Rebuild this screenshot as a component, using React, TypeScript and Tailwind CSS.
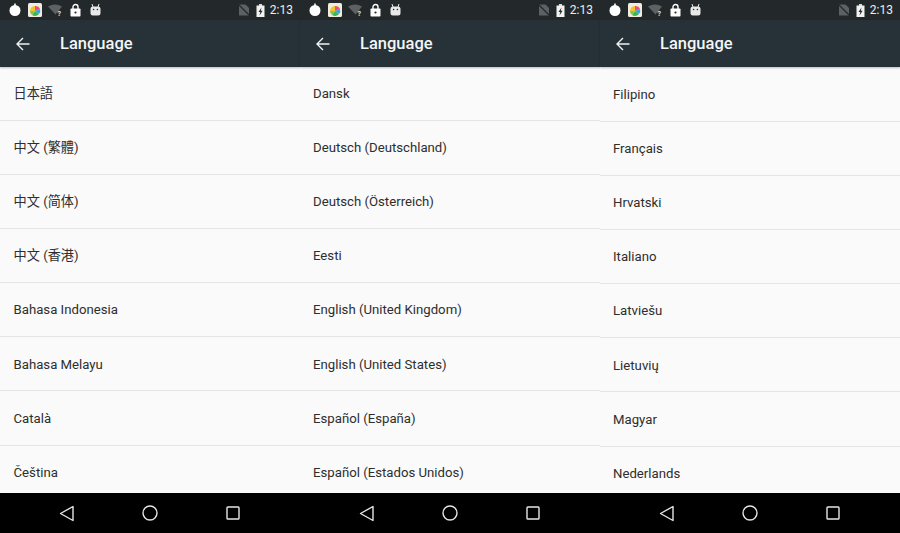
const phones = [
  {
    offset: "",
    left: "pl-[13.5px]",
    items: ["日本語", "中文 (繁體)", "中文 (简体)", "中文 (香港)", "Bahasa Indonesia", "Bahasa Melayu", "Català", "Čeština"],
  },
  {
    offset: "",
    left: "pl-[13px]",
    items: ["Dansk", "Deutsch (Deutschland)", "Deutsch (Österreich)", "Eesti", "English (United Kingdom)", "English (United States)", "Español (España)", "Español (Estados Unidos)"],
  },
  {
    offset: "pt-px",
    left: "pl-[13px]",
    items: ["Filipino", "Français", "Hrvatski", "Italiano", "Latviešu", "Lietuvių", "Magyar", "Nederlands"],
  },
];

const StatusLeft = () => (
  <div className="flex items-center">
    <svg width="14" height="14" viewBox="0 0 14 14" className="ml-2">
      <circle cx="7" cy="7.5" r="5.5" fill="#fff" />
      <rect x="6.2" y="0.5" width="1.6" height="2.5" fill="#fff" />
    </svg>
    <svg width="14" height="14" viewBox="0 0 14 14" className="ml-[6px]">
      <rect width="14" height="14" rx="1.5" fill="#f1ece0" />
      <path d="M2 8 A5 5 0 0 1 7 3 L7 8 Z" fill="#f4c430" />
      <path d="M7 3 A5 5 0 0 1 12 6 L7 8 Z" fill="#ef4d7b" />
      <path d="M12 6 A5 5 0 0 1 11 11 L7 8 Z" fill="#33a6e8" />
      <path d="M11 11 A5 5 0 0 1 4 12 L7 8 Z" fill="#3fb45a" />
      <path d="M4 12 A5 5 0 0 1 2 8 L7 8 Z" fill="#8bc34a" />
    </svg>
    <svg width="15" height="14" viewBox="0 0 15 14" className="ml-[6px]">
      <path d="M0 3.5 Q7 -0.5 14 3.5 L7.5 11.5 Z" fill="#5c6163" />
      <text x="9.5" y="13" fontSize="7" fontWeight="700" fill="#e8e8e8" fontFamily="Roboto, sans-serif">?</text>
    </svg>
    <svg width="11" height="14" viewBox="0 0 11 14" className="ml-[7px]">
      <path d="M3 6 V4 a2.5 2.5 0 0 1 5 0 V6" fill="none" stroke="#fff" strokeWidth="1.4" />
      <rect x="0.5" y="5.5" width="10" height="8" rx="0.8" fill="#fff" />
      <circle cx="5.5" cy="9.5" r="1.1" fill="#23292b" />
    </svg>
    <svg width="11" height="14" viewBox="0 0 11 14" className="ml-[9px]">
      <path d="M2 1 L3 4 M9 1 L8 4" stroke="#e8e8e8" strokeWidth="1" />
      <rect x="0.5" y="3.5" width="10" height="9" rx="2.5" fill="#e8e8e8" />
      <circle cx="3.6" cy="6.5" r="0.8" fill="#23292b" />
      <circle cx="7.4" cy="6.5" r="0.8" fill="#23292b" />
    </svg>
  </div>
);

const StatusRight = () => (
  <div className="flex items-center">
    <svg width="12" height="12" viewBox="0 0 12 12">
      <path d="M1 0.5 H7.5 L11 4 V11.5 H1 Z" fill="#5c6163" />
      <path d="M0.5 0.5 L11.5 11.5" stroke="#23292b" strokeWidth="1.2" />
    </svg>
    <svg width="9" height="13" viewBox="0 0 9 13" className="ml-[6px]">
      <rect x="3" y="0" width="3" height="2" fill="#d8d8d8" />
      <rect x="0.5" y="1.5" width="8" height="11.5" fill="#f2f2f2" />
      <path d="M5.5 3.5 L2.5 8 H4.3 L3.5 11.5 L6.6 6.8 H4.8 Z" fill="#23292b" />
    </svg>
    <span className="ml-[5px] mr-[7px] text-[12px] leading-none text-[#eceeee]">2:13</span>
  </div>
);

const NavBar = () => (
  <div className="flex h-10 items-center bg-black pl-[59px]">
    <svg width="16" height="17" viewBox="0 0 16 17">
      <path d="M14 1.5 V15.5 L1.5 8.5 Z" fill="none" stroke="#e6e6e6" strokeWidth="1.4" strokeLinejoin="round" />
    </svg>
    <svg width="16" height="16" viewBox="0 0 16 16" className="ml-[67px]">
      <circle cx="8" cy="8" r="7" fill="none" stroke="#e6e6e6" strokeWidth="1.4" />
    </svg>
    <svg width="14" height="14" viewBox="0 0 14 14" className="ml-[68px]">
      <rect x="1" y="1" width="12" height="12" rx="0.8" fill="none" stroke="#e6e6e6" strokeWidth="1.4" />
    </svg>
  </div>
);

const App = () => {
  return (
    <div className="flex h-[533px] w-[900px] overflow-hidden font-['Roboto',sans-serif]">
      {phones.map((phone) => (
        <section key={phone.items[0]} className="flex h-full w-[300px] flex-col bg-[#fafafa]">
          <div className="flex h-5 shrink-0 items-center justify-between bg-[#23292b]">
            <StatusLeft />
            <StatusRight />
          </div>
          <header className="flex h-[47px] shrink-0 items-center bg-[#263238] pt-[2px] shadow-[0_1px_2px_rgba(0,0,0,0.25)]">
            <svg width="14" height="14" viewBox="0 0 14 14" className="mb-[2px] ml-[16px]">
              <path d="M13.5 7 H1.5 M7 1 L1 7 L7 13" fill="none" stroke="#f0f2f2" strokeWidth="1.4" />
            </svg>
            <h1 className="ml-[30px] text-[16.5px] font-medium text-[#f4f6f6]">Language</h1>
          </header>
          <ul className={`flex-1 overflow-hidden ${phone.offset}`}>
            {phone.items.map((item) => (
              <li
                key={item}
                className={`flex h-[54.09px] items-center border-b border-[#e4e4e4] pt-px text-[13.2px] text-[#2e2e2e] ${phone.left}`}
              >
                <span style={{ fontFamily: "Roboto, 'Noto Sans CJK TC', sans-serif" }}>{item}</span>
              </li>
            ))}
          </ul>
          <NavBar />
        </section>
      ))}
    </div>
  );
};

export default App;
